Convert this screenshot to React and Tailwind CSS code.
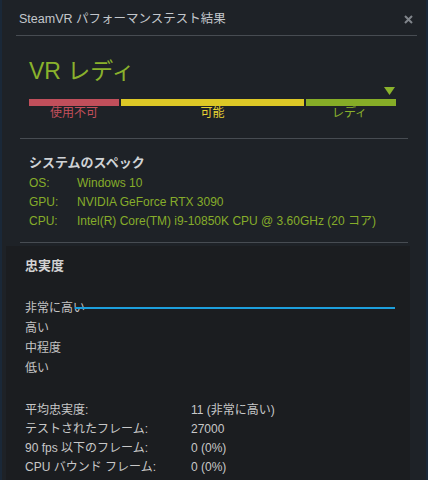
const font = "font-['Liberation_Sans','Noto_Sans_CJK_JP',sans-serif]";

const SPECS = [
  ['OS:', 'Windows 10'],
  ['GPU:', 'NVIDIA GeForce RTX 3090'],
  ['CPU:', 'Intel(R) Core(TM) i9-10850K CPU @ 3.60GHz (20 コア)'],
];

const LEVELS = ['非常に高い', '高い', '中程度', '低い'];

const STATS = [
  ['平均忠実度:', '11 (非常に高い)'],
  ['テストされたフレーム:', '27000'],
  ['90 fps 以下のフレーム:', '0 (0%)'],
  ['CPU バウンド フレーム:', '0 (0%)'],
];

const App = () => {
  return (
    <div className={`${font} w-[428px] h-[480px] overflow-hidden bg-[#1e2227] border-l-2 border-r-2 border-[#1a2838] text-[12px]`}>
      {/* タイトル */}
      <div className="h-[35px] pt-[10px] pl-[17px] pr-[13px] flex justify-between">
        <div className="leading-[18px] text-[12.5px] text-[#c3c7cc]">SteamVR パフォーマンステスト結果</div>
        <svg width="9" height="9" viewBox="0 0 9 9" className="mt-[5px]">
          <path d="M1 1L8 8M8 1L1 8" stroke="#80858b" strokeWidth="2" />
        </svg>
      </div>
      <div className="ml-[14px] mr-[9px] h-px bg-[#474c52]" />

      {/* VR レディ */}
      <div className="pl-[27px] pt-[21px]">
        <div className="leading-[28px] text-[23px] text-[#8ab22c]">VR レディ</div>
        <div className="w-[367px] flex justify-end mt-[2px]">
          <svg width="11" height="8" viewBox="0 0 11 8" className="mr-[1px]">
            <path d="M0 0H11L5.5 8Z" fill="#8ab22c" />
          </svg>
        </div>
        <div className="w-[367px] flex gap-[2px] mt-[4px]">
          <div className="w-[90px]">
            <div className="h-[7px] bg-[#c14f5b]" />
            <div className="text-center leading-[14px] text-[#c4505c]">使用不可</div>
          </div>
          <div className="flex-1">
            <div className="h-[7px] bg-[#ddc826]" />
            <div className="text-center leading-[14px] text-[#e6d233]">可能</div>
          </div>
          <div className="w-[90px]">
            <div className="h-[7px] bg-[#86ad27]" />
            <div className="text-center leading-[14px] text-[#8ab22c] pr-[3px]">レディ</div>
          </div>
        </div>
      </div>
      <div className="mx-[18px] mt-[18px] h-px bg-[#474c52]" />

      {/* システムのスペック */}
      <div className="pl-[27px] pt-[16px]">
        <div className="leading-[16px] text-[13px] font-bold text-[#cfd2d5]">システムのスペック</div>
        <div className="mt-[3px] text-[#86ad2a]">
          {SPECS.map(([k, v]) => (
            <div key={k} className="flex leading-[19px]">
              <div className="w-[48px]">{k}</div>
              <div>{v}</div>
            </div>
          ))}
        </div>
      </div>
      <div className="mx-[18px] mt-[11px] h-px bg-[#474c52]" />

      {/* 忠実度 */}
      <div className="mt-[3px] ml-[4px] mr-[16px] bg-[#1b1d20] pl-[19px] pt-[12px] h-[240px]">
        <div className="leading-[16px] text-[13px] font-bold text-[#d3d3d3]">忠実度</div>
        <div className="mt-[24px] text-[#c4c4c4]">
          {LEVELS.map((l, i) => (
            <div key={l} className="flex items-center leading-[20px]">
              <div className="whitespace-nowrap">{l}</div>
              {i === 0 && <div className="relative -ml-[10px] w-[320px] h-[2px] bg-[#1d9fdc]" />}
            </div>
          ))}
        </div>
        <div className="mt-[23px] text-[#c8c8c8]">
          {STATS.map(([k, v]) => (
            <div key={k} className="flex leading-[19px]">
              <div className="w-[166px]">{k}</div>
              <div>{v}</div>
            </div>
          ))}
        </div>
      </div>
    </div>
  );
};

export default App;
